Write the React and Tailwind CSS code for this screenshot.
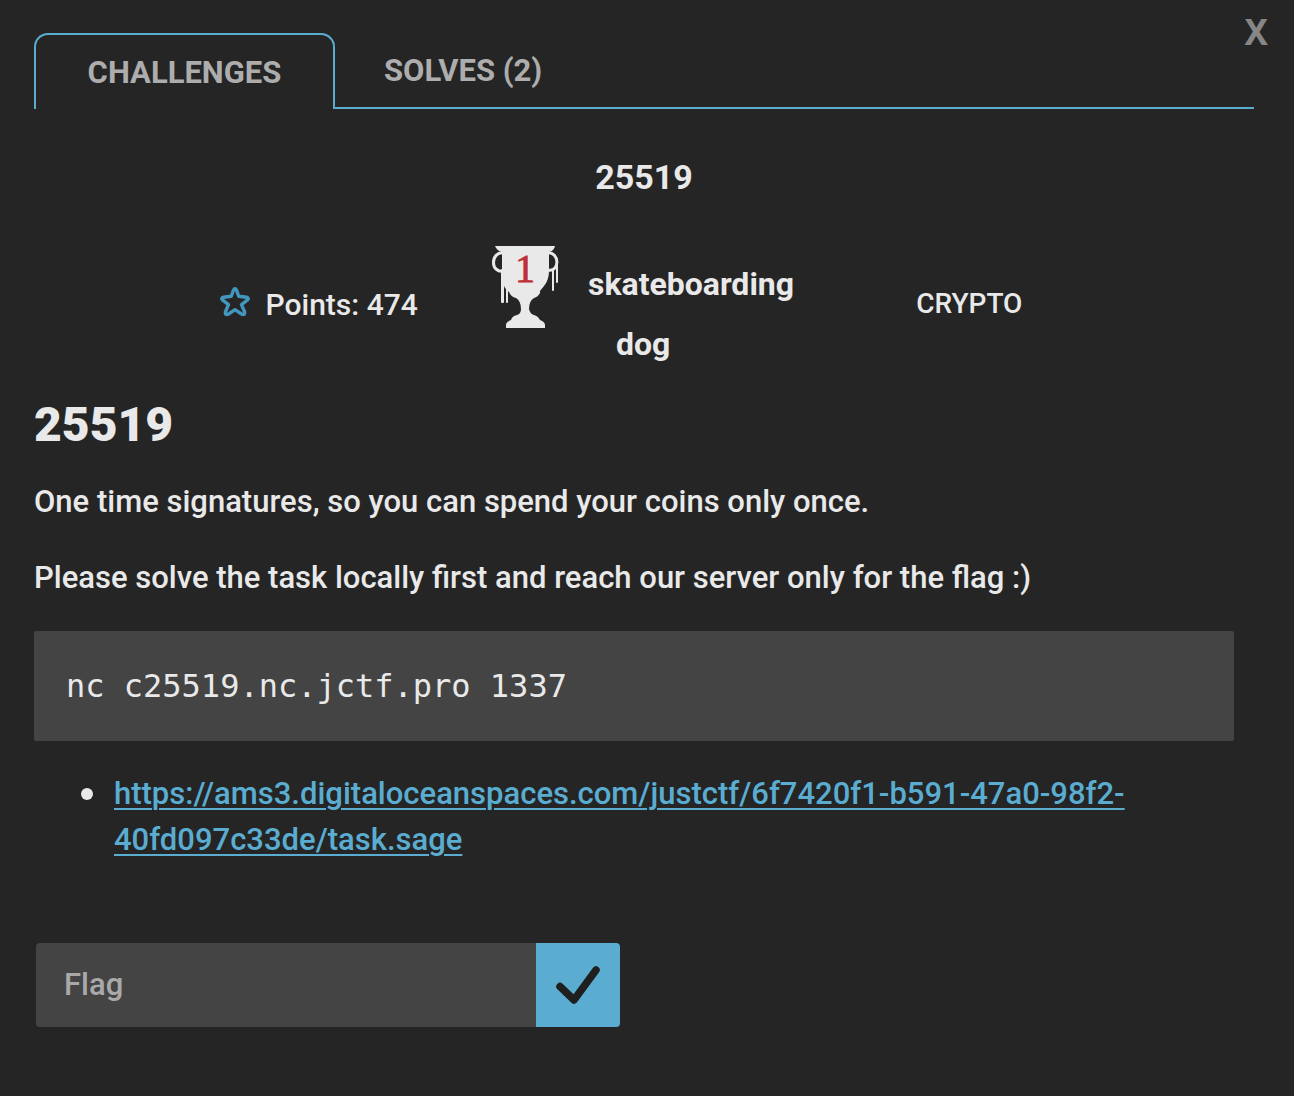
function Trophy() {
  return (
    <svg viewBox="0 0 68 84" className="h-[84px] w-[68px] shrink-0" role="img" aria-label="First solve">
      <g fill="#e9e9e9">
        <path d="M3 1H63Q62 6 57 7V26Q57 35 52 41L48 46V48Q46 52 42 53Q37 56 37 64Q38 69 42 70Q46 71 48 75Q53 77 53 80V83H14V80Q14 77 19 75Q20 71 25 70Q29 69 29 64Q29 56 24 53Q19 52 17 47L13 43L10 36V7Q5 6 3 1Z" />
        <rect x="9" y="24" width="3" height="34" rx="1" />
        <rect x="14" y="36" width="2" height="22" rx="1" />
        <rect x="60" y="24" width="2" height="22" rx="1" />
        <rect x="64" y="16" width="2" height="22" rx="1" />
      </g>
      <path d="M12 8C-2 6-2 29 12 26M55 8C68 6 68 28 56 25" fill="none" stroke="#e9e9e9" strokeWidth="3" />
      <text x="33" y="37" textAnchor="middle" fill="#be2f33" stroke="#be2f33" strokeWidth="0.8" fontSize="40" fontFamily="Liberation Serif, serif">
        1
      </text>
    </svg>
  );
}

function Star() {
  return (
    <svg viewBox="0 0 30 30" className="size-[30px] shrink-0" fill="none" stroke="#4397bf" strokeWidth="3.4" strokeLinejoin="round" aria-hidden="true">
      <path d="M13.4 3.3Q15 .3 16.6 3.3L18.7 9.2L26.6 10.2Q29.5 11 27.3 13.2L21.5 17.6L24.6 25Q25 28.8 21.5 27L15 22.7L8.5 27Q5 28.8 5.4 25L8.5 17.6L2.7 13.2Q.5 11 3.4 10.2L11.3 9.2Z" />
    </svg>
  );
}

const FILE_URL =
  "https://ams3.digitaloceanspaces.com/justctf/6f7420f1-b591-47a0-98f2-40fd097c33de/task.sage";

export default function App() {
  return (
    <div className="min-h-screen bg-[#252525] pr-10 pl-[34px] font-['Roboto',sans-serif] text-[31px] font-medium text-[#e9e9e9]">
      <button type="button" aria-label="Close" className="absolute top-2 right-[26px] font-['Noto_Sans',sans-serif] text-[35px] leading-[48px] font-bold text-[#868686]">
        X
      </button>
      <header className="pt-[33px]">
        <nav className="flex h-[76px] font-bold text-[#adadad]" role="tablist">
          <button type="button" role="tab" aria-selected="true" className="w-[301px] rounded-t-[14px] border-2 border-b-0 border-[#5aadd1] pt-[2px]">
            CHALLENGES
          </button>
          <div className="flex-1 border-b-2 border-[#5aadd1]">
            <button type="button" role="tab" aria-selected="false" className="h-full px-[49px] pt-[2px]">
              SOLVES (2)
            </button>
          </div>
        </nav>
      </header>
      <main>
        <h1 className="mt-11 text-center text-[34px] leading-[48px] font-bold">25519</h1>
        <section className="mx-[10%] mt-11 mb-5 grid grid-cols-3">
          <div className="flex h-[118px] items-center justify-center gap-4 text-[30px]">
            <div className="pb-1">
              <Star />
            </div>
            <span className="whitespace-nowrap">Points: 474</span>
          </div>
          <div className="flex items-start justify-center gap-7">
            <Trophy />
            <div className="w-[208px] pt-[9px] text-[32px] leading-[60px] font-bold">
              <span className="block">skateboarding</span>
              <span className="block pl-7">dog</span>
            </div>
          </div>
          <div className="flex h-[118px] items-center justify-center text-[28px]">CRYPTO</div>
        </section>
        <h2 className="text-[48px] leading-[62px] font-black">25519</h2>
        <p className="mt-[23px] leading-[46px]">One time signatures, so you can spend your coins only once.</p>
        <p className="mt-[30px] leading-[46px]">Please solve the task locally first and reach our server only for the flag :)</p>
        <pre className="mt-[30px] mr-5 rounded-[2px] bg-[#444444] p-8 font-['DejaVu_Sans_Mono',monospace] text-[32px] leading-[46px] font-normal">
          nc c25519.nc.jctf.pro 1337
        </pre>
        <ul className="mt-[30px] mr-5 pl-[47px] leading-[46px]">
          <li className="flex gap-[21px]">
            <span className="mt-[17px] size-3 shrink-0 rounded-full bg-[#e9e9e9]" aria-hidden="true" />
            <a href={FILE_URL} className="text-[#5aadd1] underline decoration-2 underline-offset-4">
              {FILE_URL}
            </a>
          </li>
        </ul>
        <form className="mt-20 ml-[2px] flex h-[84px] w-[584px]" onSubmit={(e) => e.preventDefault()}>
          <input aria-label="Flag" placeholder="Flag" className="min-w-0 flex-1 rounded-l-[4px] bg-[#444444] px-7 outline-none placeholder:text-[#a9a9a9]" />
          <button type="submit" aria-label="Submit flag" className="flex w-[84px] items-center justify-center rounded-r-[4px] bg-[#5aadd1]">
            <svg viewBox="0 0 84 84" className="size-full" fill="none" stroke="#1f1f1f" strokeWidth="7.5" strokeLinecap="round" strokeLinejoin="round" aria-hidden="true">
              <path d="M24 43.5L38 57L60 27" />
            </svg>
          </button>
        </form>
      </main>
    </div>
  );
}
